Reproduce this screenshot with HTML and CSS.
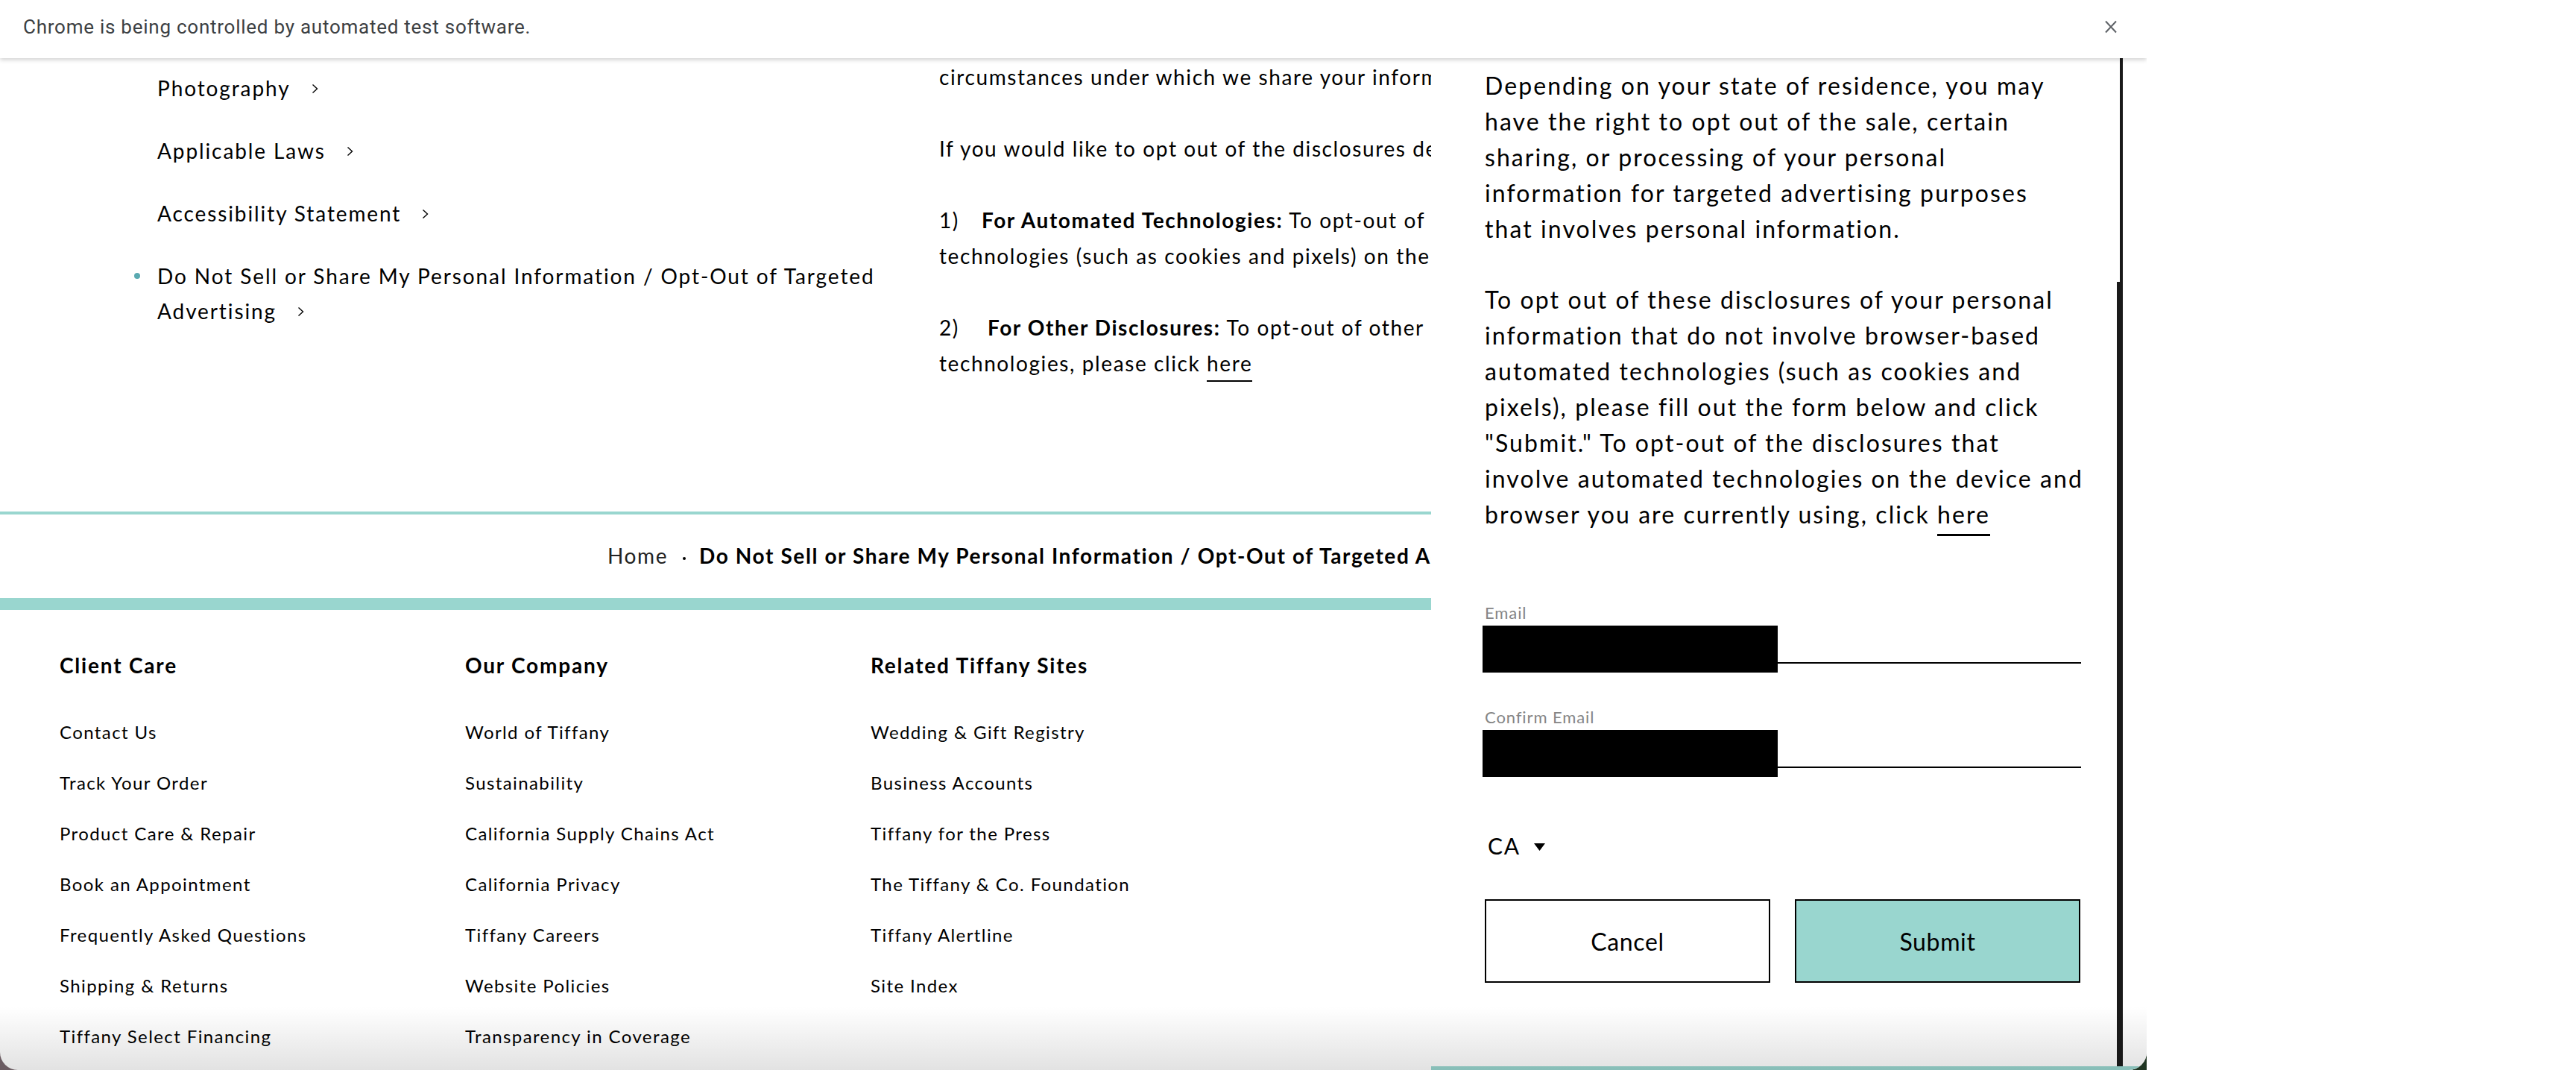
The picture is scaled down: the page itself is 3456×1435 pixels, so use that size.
FILE: index.html
```html
<!DOCTYPE html>
<html lang="en">
<head>
<meta charset="utf-8">
<title>Do Not Sell or Share My Personal Information</title>
<link rel="stylesheet" href="styles.css">
</head>
<body>
<div class="screen">
  <div class="window">
    <div class="frame">
      <div class="infobar">
        <span class="infobar-text">Chrome is being controlled by automated test software.</span>
        <button class="infobar-close" aria-label="Close">
          <svg width="18" height="18" viewBox="0 0 18 18"><path d="M2 1.5L16 16.5M16 1.5L2 16.5" stroke="#5f6368" stroke-width="2" fill="none"/></svg>
        </button>
      </div>
      <div class="page">
        <main class="main">
          <div class="top">
            <ul class="side-nav">
              <li><a>Photography</a><svg class="chev" viewBox="0 0 9 14"><path d="M1.5 1.5L7.5 7L1.5 12.5" fill="none" stroke="#000" stroke-width="1.4"/></svg></li>
              <li><a>Applicable Laws</a><svg class="chev" viewBox="0 0 9 14"><path d="M1.5 1.5L7.5 7L1.5 12.5" fill="none" stroke="#000" stroke-width="1.4"/></svg></li>
              <li><a>Accessibility Statement</a><svg class="chev" viewBox="0 0 9 14"><path d="M1.5 1.5L7.5 7L1.5 12.5" fill="none" stroke="#000" stroke-width="1.4"/></svg></li>
              <li class="active"><a>Do Not Sell or Share My Personal Information / Opt-Out of Targeted Advertising</a><svg class="chev" viewBox="0 0 9 14"><path d="M1.5 1.5L7.5 7L1.5 12.5" fill="none" stroke="#000" stroke-width="1.4"/></svg></li>
            </ul>
            <div class="policy">
              <p>circumstances under which we share your information</p>
              <p>If you would like to opt out of the disclosures described</p>
              <p><span class="num">1)</span><strong>For Automated Technologies:</strong> To opt-out of<br>technologies (such as cookies and pixels) on the</p>
              <p><span class="num num-2">2)</span><strong>For Other Disclosures:</strong> To opt-out of other<br>technologies, please click <a class="ul">here</a></p>
            </div>
          </div>
          <div class="rule"></div>
          <nav class="breadcrumb"><a>Home</a><span class="sep"></span><strong>Do Not Sell or Share My Personal Information / Opt-Out of Targeted Advertising</strong></nav>
          <div class="band"></div>
          <footer class="footer">
            <div class="fcol">
              <h3>Client Care</h3>
              <ul>
                <li>Contact Us</li>
                <li>Track Your Order</li>
                <li>Product Care &amp; Repair</li>
                <li>Book an Appointment</li>
                <li>Frequently Asked Questions</li>
                <li>Shipping &amp; Returns</li>
                <li>Tiffany Select Financing</li>
              </ul>
            </div>
            <div class="fcol">
              <h3>Our Company</h3>
              <ul>
                <li>World of Tiffany</li>
                <li>Sustainability</li>
                <li>California Supply Chains Act</li>
                <li>California Privacy</li>
                <li>Tiffany Careers</li>
                <li>Website Policies</li>
                <li>Transparency in Coverage</li>
              </ul>
            </div>
            <div class="fcol">
              <h3>Related Tiffany Sites</h3>
              <ul>
                <li>Wedding &amp; Gift Registry</li>
                <li>Business Accounts</li>
                <li>Tiffany for the Press</li>
                <li>The Tiffany &amp; Co. Foundation</li>
                <li>Tiffany Alertline</li>
                <li>Site Index</li>
              </ul>
            </div>
          </footer>
        </main>

        <aside class="modal">
          <div class="modal-body">
            <p>Depending on your state of residence, you may<br>have the right to opt out of the sale, certain<br>sharing, or processing of your personal<br>information for targeted advertising purposes<br>that involves personal information.</p>
            <p class="last">To opt out of these disclosures of your personal<br>information that do not involve browser-based<br>automated technologies (such as cookies and<br>pixels), please fill out the form below and click<br>"Submit." To opt-out of the disclosures that<br>involve automated technologies on the device and<br>browser you are currently using, click <a class="ul">here</a></p>
            <form class="form">
              <div class="field">
                <label>Email</label>
                <div class="input"><span class="redact"></span></div>
              </div>
              <div class="field">
                <label>Confirm Email</label>
                <div class="input"><span class="redact"></span></div>
              </div>
              <div class="select"><span>CA</span><svg width="15" height="10" viewBox="0 0 15 10"><path d="M0 0H15L7.5 10Z" fill="#000"/></svg></div>
              <div class="actions">
                <button type="button" class="btn">Cancel</button>
                <button type="button" class="btn btn-primary">Submit</button>
              </div>
            </form>
          </div>
          <div class="scrollbar"><div class="thumb"></div></div>
          <div class="modal-bottom"></div>
        </aside>
        <div class="fade"></div>
      </div>
    </div>
  </div>
</div>
</body>
</html>
```

FILE: styles.css
```css
* { box-sizing: border-box; }
html, body { margin: 0; padding: 0; background: #fff; }
body { width: 3456px; height: 1435px; overflow: hidden; }

.screen { display: flex; width: 3456px; height: 1435px; background: #fff; }
.window {
  flex: none;
  width: 2880px;
  height: 1435px;
  background: linear-gradient(to right, #6b5c62 0, #6b5c62 50%, #1f3522 50%, #1f3522 100%);
}
.frame {
  height: 100%;
  background: #fff;
  border-radius: 0 0 24px 24px;
  overflow: hidden;
  display: flex;
  flex-direction: column;
}

/* Chrome infobar */
.infobar {
  flex: none;
  height: 78px;
  display: flex;
  align-items: center;
  justify-content: space-between;
  padding: 0 39px 6px 31px;
  background: #fff;
  position: relative;
  z-index: 3;
  box-shadow: 0 2px 6px rgba(0, 0, 0, 0.2);
  font-family: Roboto, "Liberation Sans", sans-serif;
  font-size: 26px;
  letter-spacing: 0.75px;
  color: #3c4043;
}
.infobar-close { border: 0; background: none; padding: 0; width: 18px; height: 18px; display: block; }
.infobar-close svg { display: block; }

/* Page */
.page {
  flex: 1;
  display: flex;
  position: relative;
  overflow: hidden;
  font-family: Lato, "Liberation Sans", sans-serif;
  letter-spacing: 1.6px;
  color: #000;
}
.page a { color: inherit; text-decoration: none; }

.main { flex: none; width: 1920px; overflow: hidden; }

.top { display: flex; height: 608px; }
.side-nav {
  flex: none;
  width: 1260px;
  margin: 0;
  padding: 17px 40px 0 211px;
  list-style: none;
  font-size: 28px;
  line-height: 47px;
  letter-spacing: 1.9px;
}
.side-nav li { margin-bottom: 37px; position: relative; }
.side-nav li.active::before {
  content: "";
  position: absolute;
  left: -31px;
  top: 19px;
  width: 8px;
  height: 8px;
  border-radius: 50%;
  background: #5aaab1;
}
.chev { display: inline-block; width: 9px; height: 14px; margin-left: 28px; vertical-align: 3px; }

.policy {
  flex: 1;
  min-width: 0;
  overflow: hidden;
  white-space: nowrap;
  padding-top: 1px;
  font-size: 28px;
  line-height: 48px;
}
.policy p { margin: 0 0 48px; }
.policy .num { display: inline-block; width: 57px; }
.policy .num-2 { width: 65px; }
.policy strong { font-weight: 700; }
.ul { padding-bottom: 6px; border-bottom: 2px solid #000; }

.rule { height: 4px; background: #99d6cf; }
.breadcrumb {
  padding: 35px 0 37px 815px;
  font-size: 28px;
  line-height: 40px;
  white-space: nowrap;
  overflow: hidden;
}
.breadcrumb a { color: #222; }
.breadcrumb .sep {
  display: inline-block;
  width: 4px;
  height: 4px;
  border-radius: 50%;
  background: #000;
  margin: 0 18px 0 20px;
  vertical-align: middle;
}
.breadcrumb strong { font-weight: 700; }
.band { height: 16px; background: #99d6cf; }

.footer {
  display: grid;
  grid-template-columns: repeat(3, 544px);
  padding: 54px 0 0 80px;
}
.footer h3 { margin: 0; font-size: 28px; line-height: 40px; font-weight: 700; letter-spacing: 1.8px; }
.footer ul { list-style: none; margin: 50px 0 0; padding: 0; font-size: 24px; line-height: 40px; letter-spacing: 1.4px; }
.footer li { margin-bottom: 28px; }

/* Opt-out side panel */
.modal {
  flex: none;
  width: 960px;
  position: relative;
  background: #fff;
}
.modal-body { padding: 13px 88px 0 72px; font-size: 32px; line-height: 48px; letter-spacing: 2.08px; }
.modal-body p { margin: 0 0 47px; white-space: nowrap; }
.modal-body p.last { margin-bottom: 0; }
.modal-body .ul { padding-bottom: 7px; border-bottom-width: 3px; }

.form { margin-top: 96px; letter-spacing: 1.6px; }
.field + .field { margin-top: 60px; }
.field label { display: block; font-size: 22px; line-height: 24px; color: #858585; letter-spacing: 0.9px; }
.input { position: relative; height: 56px; border-bottom: 2px solid #000; }
.redact { position: absolute; left: -3px; top: 5px; width: 396px; height: 63px; background: #000; }

.select {
  display: flex;
  align-items: center;
  gap: 18px;
  margin-top: 80px;
  padding-left: 4px;
  font-size: 30px;
  line-height: 48px;
}
.select svg { display: block; margin-top: 3px; }

.actions { display: flex; gap: 33px; margin-top: 48px; }
.btn {
  width: 383px;
  height: 112px;
  border: 2px solid #000;
  background: #fff;
  font-family: Lato, "Liberation Sans", sans-serif;
  font-size: 32px;
  letter-spacing: 0.64px;
  color: #000;
  padding: 0;
}
.btn-primary { background: #99d6cf; }

.scrollbar { position: absolute; top: 0; bottom: 5px; right: 32px; width: 8px; }
.scrollbar::before { content: ""; position: absolute; right: 0; top: 0; bottom: 0; width: 4px; background: #1a1a1a; }
.thumb { position: absolute; left: 0; right: 0; top: 300px; bottom: 0; background: #1a1a1a; }
.modal-bottom { position: absolute; left: 0; right: 0; bottom: 0; height: 5px; background: #99d6cf; }

.fade {
  position: absolute;
  left: 0;
  right: 0;
  bottom: 0;
  height: 85px;
  background: linear-gradient(rgba(0, 0, 0, 0), rgba(0, 0, 0, 0.115));
  z-index: 4;
  pointer-events: none;
}
```
